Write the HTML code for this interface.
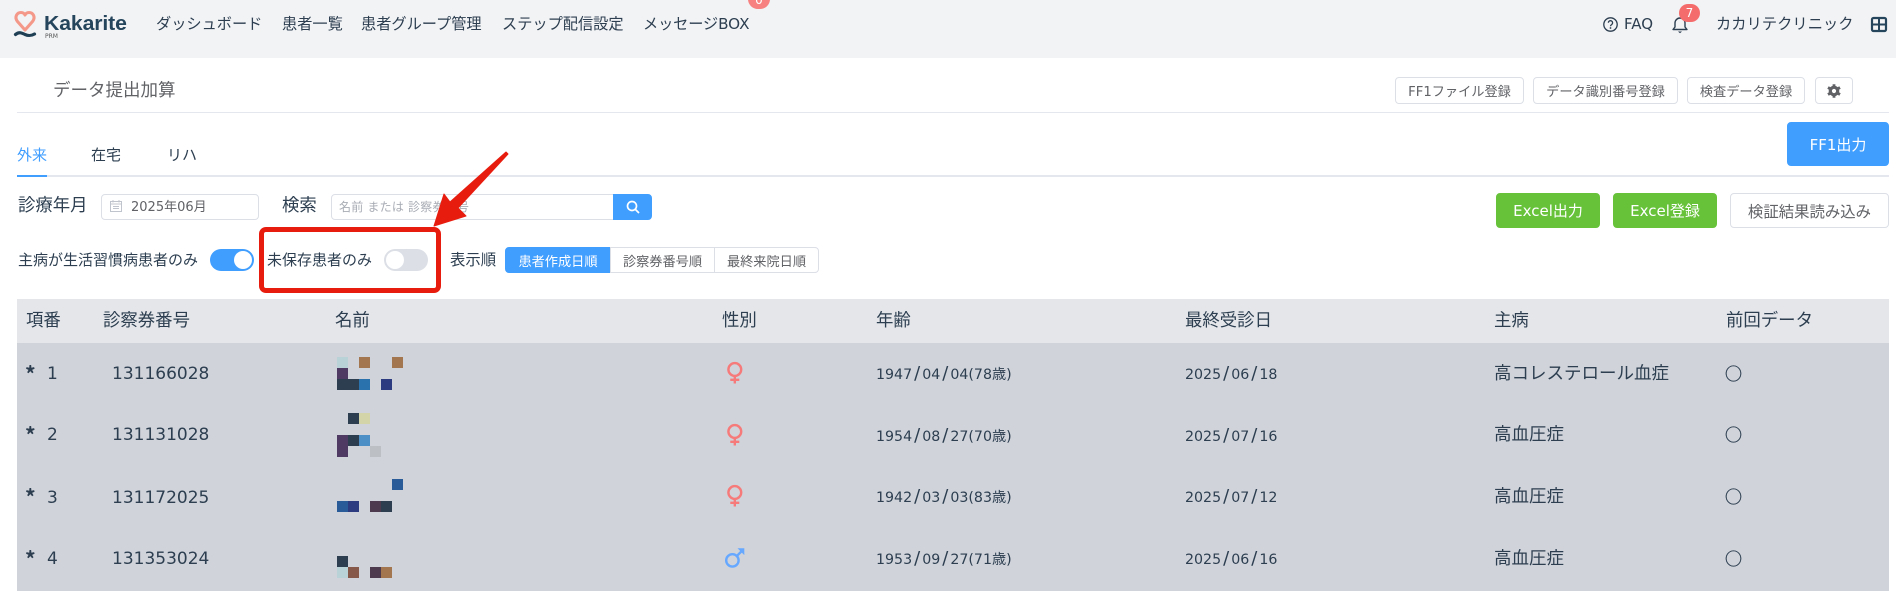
<!DOCTYPE html>
<html lang="ja"><head><meta charset="utf-8"><title>データ提出加算</title>
<style>
html,body{margin:0;padding:0;background:#fff}
body{width:1896px;height:591px;position:relative;overflow:hidden;font-family:"DejaVu Sans","Noto Sans CJK JP",sans-serif;color:#2c3e50;font-size:15px}
.t{position:absolute;white-space:nowrap;line-height:20px}
.b{position:absolute;box-sizing:border-box;display:flex;align-items:center;justify-content:center;white-space:nowrap;border:1px solid #dcdfe6;border-radius:4px;background:#fff;color:#606266;font-size:13.2px}
.g{background:#67c23a;border-color:#67c23a;color:#fff;font-size:15px}
.px{position:absolute;width:11px;height:11px}
.r{position:absolute;left:17px;width:1872px;background:#d0d3da}
svg{position:absolute;overflow:visible}
.big{font-size:17.4px}
.nav{font-size:15.2px}
.num{font-size:17px}
.d{font-size:14.2px}
.d i{font-style:normal;font-size:18px;line-height:14px;padding:0 2px}
.st{font-family:"Noto Sans CJK JP",sans-serif;font-weight:bold;font-size:21px;color:#2c3e50}
.o{font-size:17px;font-family:"Noto Sans CJK JP",sans-serif;-webkit-text-stroke:.35px #2c3e50}
</style></head><body>
<div style="position:absolute;left:0;top:0;width:1896px;height:58px;background:#f2f3f5"></div>
<svg style="left:14px;top:10px" width="24" height="32" viewBox="0 0 24 32"><path d="M11 20 L3.500 11.500 C0 7 3 2.500 7 2.500 C9 2.500 10.300 3.500 11 5 C11.700 3.500 13 2.500 15 2.500 C19 2.500 22 7 18.500 11.500 Z" fill="none" stroke="#f4998a" stroke-width="3.100" stroke-linejoin="round"/><path d="M1.500 24.500 C5 21.500 8 23 11 24.500 C14.500 26 17 26 20.500 24" fill="none" stroke="#1f3f55" stroke-width="3.200" stroke-linecap="round"/></svg>
<div class="t" style="left:44px;top:13px;font-size:20px;font-weight:bold;color:#25455c;line-height:22px;letter-spacing:-.1px;font-family:'Liberation Sans',sans-serif;transform:scaleX(1.06);transform-origin:left">Kakarite</div>
<div class="t" style="left:45px;top:33px;font-size:6px;line-height:8px;color:#555">PRM</div>
<div class="t nav" style="left:156px;top:14px">ダッシュボード</div>
<div class="t nav" style="left:282px;top:14px">患者一覧</div>
<div class="t nav" style="left:361px;top:14px">患者グループ管理</div>
<div class="t nav" style="left:502px;top:14px">ステップ配信設定</div>
<div class="t nav" style="left:643px;top:14px;letter-spacing:-.1px">メッセージBOX</div>
<div class="t" style="left:748px;top:-11px;width:22px;height:20px;border-radius:10px;background:#f78080;color:#fff;text-align:center;font-size:12px;line-height:22px">0</div>
<svg style="left:1603px;top:17px" width="15" height="15" viewBox="0 0 15 15"><circle cx="7.500" cy="7.500" r="6.700" fill="none" stroke="#2c3e50" stroke-width="1.300"/><path d="M5.400 5.800a2.100 2.100 0 1 1 3.300 1.700c-.8.500-1.200.9-1.200 1.700" fill="none" stroke="#2c3e50" stroke-width="1.300"/><circle cx="7.500" cy="11" r=".9" fill="#2c3e50"/></svg>
<div class="t" style="left:1624px;top:14px;font-size:15px">FAQ</div>
<svg style="left:1672px;top:15px" width="16" height="19" viewBox="0 0 16 19"><path d="M1 14.500h14l-2-2.500V8a5 5 0 0 0-10 0v4z" fill="none" stroke="#2c3e50" stroke-width="1.400" stroke-linejoin="round"/><path d="M6 16.500h4l-2 1.800z" fill="#2c3e50"/></svg>
<div class="t" style="left:1679px;top:4px;width:21px;height:18px;border-radius:9px;background:#f56c6c;color:#fff;text-align:center;font-size:12px;line-height:18px">7</div>
<div class="t nav" style="left:1716px;top:14px;letter-spacing:.1px">カカリテクリニック</div>
<svg style="left:1871px;top:17px" width="16" height="15" viewBox="0 0 16 15"><rect x="1" y="1" width="14" height="13" rx="1.500" fill="none" stroke="#25455c" stroke-width="2.200"/><path d="M8 1v13M1 7.500h14" stroke="#25455c" stroke-width="2"/></svg>

<div class="t" style="left:53px;top:81px;font-size:17.500px;color:#606266">データ提出加算</div>
<div class="b" style="left:1395px;top:77px;width:129px;height:27px">FF1ファイル登録</div>
<div class="b" style="left:1533px;top:77px;width:145px;height:27px">データ識別番号登録</div>
<div class="b" style="left:1687px;top:77px;width:118px;height:27px">検査データ登録</div>
<div class="b" style="left:1815px;top:77px;width:38px;height:27px"></div>
<svg style="left:1827px;top:84px" width="14" height="14" viewBox="0 0 14 14"><circle cx="7" cy="7" r="3.700" fill="none" stroke="#606266" stroke-width="3.200"/><path d="M7 .3v3M7 10.700v3M1 3.500l2.600 1.500M10.400 9l2.600 1.500M1 10.500L3.600 9M10.400 5l2.600-1.500" stroke="#606266" stroke-width="2.800"/></svg>
<div style="position:absolute;left:17px;top:112px;width:1872px;height:1px;background:#e4e7ed"></div>
<div class="b" style="left:1787px;top:122px;width:102px;height:44px;background:#409eff;border-color:#409eff;color:#fff;font-size:15px">FF1出力</div>

<div class="t" style="left:17px;top:145px;color:#409eff">外来</div>
<div class="t" style="left:91px;top:145px">在宅</div>
<div class="t" style="left:167px;top:145px">リハ</div>
<div style="position:absolute;left:17px;top:175px;width:1872px;height:2px;background:#e4e7ed"></div>
<div style="position:absolute;left:17px;top:175px;width:30px;height:2px;background:#409eff"></div>

<div class="t big" style="left:18px;top:196px">診療年月</div>
<div class="b" style="left:101px;top:194px;width:158px;height:26px"></div>
<svg style="left:110px;top:200px" width="12" height="12" viewBox="0 0 12 12"><rect x=".5" y="1.500" width="11" height="10" fill="none" stroke="#c0c4cc"/><path d="M0 4h12M3 0v2.500M9 0v2.500M3 6.500h6M3 8.500h6" stroke="#c0c4cc"/></svg>
<div class="t" style="left:131px;top:198px;font-size:13px;color:#606266">2025年06月</div>
<div class="t big" style="left:282px;top:196px">検索</div>
<div class="b" style="left:331px;top:194px;width:283px;height:26px;border-radius:4px 0 0 4px"></div>
<div class="t" style="left:339px;top:197px;font-size:12px;color:#a8acb4;letter-spacing:.2px">名前 または 診察券番号</div>
<div class="b" style="left:613px;top:194px;width:39px;height:26px;background:#409eff;border-color:#409eff;border-radius:0 4px 4px 0"></div>
<svg style="left:626px;top:200px" width="14" height="14" viewBox="0 0 14 14"><circle cx="6" cy="6" r="4.500" fill="none" stroke="#fff" stroke-width="1.700"/><path d="M9.500 9.500L13 13" stroke="#fff" stroke-width="1.700"/></svg>
<div class="b g" style="left:1496px;top:193px;width:104px;height:35px">Excel出力</div>
<div class="b g" style="left:1613px;top:193px;width:104px;height:35px">Excel登録</div>
<div class="b" style="left:1730px;top:193px;width:159px;height:35px;font-size:15.4px">検証結果読み込み</div>

<div class="t" style="left:18px;top:250px">主病が生活習慣病患者のみ</div>
<div style="position:absolute;left:210px;top:249px;width:44px;height:22px;border-radius:11px;background:#409eff"></div>
<div style="position:absolute;left:234px;top:251px;width:18px;height:18px;border-radius:9px;background:#fff"></div>
<div class="t" style="left:267px;top:250px">未保存患者のみ</div>
<div style="position:absolute;left:384px;top:249px;width:44px;height:22px;border-radius:11px;background:#dcdfe6"></div>
<div style="position:absolute;left:386px;top:251px;width:18px;height:18px;border-radius:9px;background:#fff"></div>
<div class="t" style="left:450px;top:250px;font-size:15.4px">表示順</div>
<div class="b" style="left:505px;top:247px;width:106px;height:26px;background:#409eff;border-color:#409eff;color:#fff;border-radius:4px 0 0 4px">患者作成日順</div>
<div class="b" style="left:610px;top:247px;width:105px;height:26px;border-radius:0">診察券番号順</div>
<div class="b" style="left:714px;top:247px;width:105px;height:26px;border-radius:0 4px 4px 0">最終来院日順</div>

<div style="position:absolute;left:17px;top:299px;width:1872px;height:44px;background:#e4e6ea"></div>
<div class="r" style="top:343px;height:248px"></div>
<div class="t big" style="left:26px;top:311px">項番</div>
<div class="t big" style="left:103px;top:311px">診察券番号</div>
<div class="t big" style="left:335px;top:311px">名前</div>
<div class="t big" style="left:722px;top:311px">性別</div>
<div class="t big" style="left:876px;top:311px">年齢</div>
<div class="t big" style="left:1185px;top:311px">最終受診日</div>
<div class="t big" style="left:1494px;top:311px">主病</div>
<div class="t big" style="left:1726px;top:311px">前回データ</div>

<div class="t st" style="left:25px;top:364px">*</div><div class="t num" style="left:47px;top:364px">1</div>
<div class="t st" style="left:25px;top:425px">*</div><div class="t num" style="left:47px;top:425px">2</div>
<div class="t st" style="left:25px;top:487px">*</div><div class="t num" style="left:47px;top:488px">3</div>
<div class="t st" style="left:25px;top:549px">*</div><div class="t num" style="left:47px;top:549px">4</div>

<div class="t num" style="left:112px;top:364px">131166028</div>
<div class="t num" style="left:112px;top:425px">131131028</div>
<div class="t num" style="left:112px;top:488px">131172025</div>
<div class="t num" style="left:112px;top:549px">131353024</div>

<div class="px" style="left:337px;top:357px;background:#b9d2d8"></div><div class="px" style="left:359px;top:357px;background:#a37650"></div><div class="px" style="left:392px;top:357px;background:#a37650"></div><div class="px" style="left:337px;top:368px;background:#4e3a63"></div><div class="px" style="left:337px;top:379px;background:#2c3e50"></div><div class="px" style="left:348px;top:379px;background:#2c3e50"></div><div class="px" style="left:359px;top:379px;background:#2a72ad"></div><div class="px" style="left:381px;top:379px;background:#2c3a80"></div>
<div class="px" style="left:348px;top:413px;background:#2c3e50"></div><div class="px" style="left:359px;top:413px;background:#d3d5a8"></div><div class="px" style="left:337px;top:435px;background:#4e3a63"></div><div class="px" style="left:348px;top:435px;background:#2c3e50"></div><div class="px" style="left:359px;top:435px;background:#4b8fc6"></div><div class="px" style="left:337px;top:446px;background:#4e3a63"></div><div class="px" style="left:370px;top:446px;background:#bcbfc4"></div>
<div class="px" style="left:392px;top:479px;background:#2a5b99"></div><div class="px" style="left:337px;top:501px;background:#2a5b99"></div><div class="px" style="left:348px;top:501px;background:#2c3a80"></div><div class="px" style="left:370px;top:501px;background:#4e3a4e"></div><div class="px" style="left:381px;top:501px;background:#2c3e50"></div>
<div class="px" style="left:337px;top:556px;background:#2c3e50"></div><div class="px" style="left:337px;top:567px;background:#b9d2d8"></div><div class="px" style="left:348px;top:567px;background:#85584a"></div><div class="px" style="left:370px;top:567px;background:#4e3a4e"></div><div class="px" style="left:381px;top:567px;background:#a37650"></div>

<svg style="left:727px;top:362px" width="16" height="22" viewBox="0 0 16 22"><circle cx="7.800" cy="7.500" r="6.400" fill="none" stroke="#f67a7a" stroke-width="2.400"/><path d="M7.800 14v7.500M3.300 17.800h9" stroke="#f67a7a" stroke-width="2.400"/></svg>
<svg style="left:727px;top:424px" width="16" height="22" viewBox="0 0 16 22"><circle cx="7.800" cy="7.500" r="6.400" fill="none" stroke="#f67a7a" stroke-width="2.400"/><path d="M7.800 14v7.500M3.300 17.800h9" stroke="#f67a7a" stroke-width="2.400"/></svg>
<svg style="left:727px;top:485px" width="16" height="22" viewBox="0 0 16 22"><circle cx="7.800" cy="7.500" r="6.400" fill="none" stroke="#f67a7a" stroke-width="2.400"/><path d="M7.800 14v7.500M3.300 17.800h9" stroke="#f67a7a" stroke-width="2.400"/></svg>
<svg style="left:725px;top:548px" width="20" height="20" viewBox="0 0 20 20"><circle cx="7.400" cy="12.400" r="6.200" fill="none" stroke="#66a8ff" stroke-width="2.400"/><path d="M11.800 8L17 2.800" stroke="#66a8ff" stroke-width="2.400"/><path d="M12.500 .3h6.800v6.800z" fill="#66a8ff"/></svg>

<div class="t d" style="left:876px;top:365px">1947<i>/</i>04<i>/</i>04(78歳)</div>
<div class="t d" style="left:876px;top:427px">1954<i>/</i>08<i>/</i>27(70歳)</div>
<div class="t d" style="left:876px;top:488px">1942<i>/</i>03<i>/</i>03(83歳)</div>
<div class="t d" style="left:876px;top:550px">1953<i>/</i>09<i>/</i>27(71歳)</div>
<div class="t d" style="left:1185px;top:365px">2025<i>/</i>06<i>/</i>18</div>
<div class="t d" style="left:1185px;top:427px">2025<i>/</i>07<i>/</i>16</div>
<div class="t d" style="left:1185px;top:488px">2025<i>/</i>07<i>/</i>12</div>
<div class="t d" style="left:1185px;top:550px">2025<i>/</i>06<i>/</i>16</div>

<div class="t" style="left:1494px;top:364px;font-size:17.500px">高コレステロール血症</div>
<div class="t" style="left:1494px;top:425px;font-size:17.500px">高血圧症</div>
<div class="t" style="left:1494px;top:487px;font-size:17.500px">高血圧症</div>
<div class="t" style="left:1494px;top:549px;font-size:17.500px">高血圧症</div>
<div class="t o" style="left:1725px;top:363px">○</div>
<div class="t o" style="left:1725px;top:424px">○</div>
<div class="t o" style="left:1725px;top:486px">○</div>
<div class="t o" style="left:1725px;top:548px">○</div>

<div style="position:absolute;left:259px;top:227px;width:182px;height:66px;box-sizing:border-box;border:5.500px solid #e81c0e;border-radius:7px"></div>
<svg style="left:0;top:0" width="1896" height="591" viewBox="0 0 1896 591"><path d="M506 152L508 154L458 208L466 216L434 226L444 194L450 202Z" fill="#e81c0e" stroke="#e81c0e" stroke-width="1" stroke-linejoin="round"/></svg>
</body></html>
